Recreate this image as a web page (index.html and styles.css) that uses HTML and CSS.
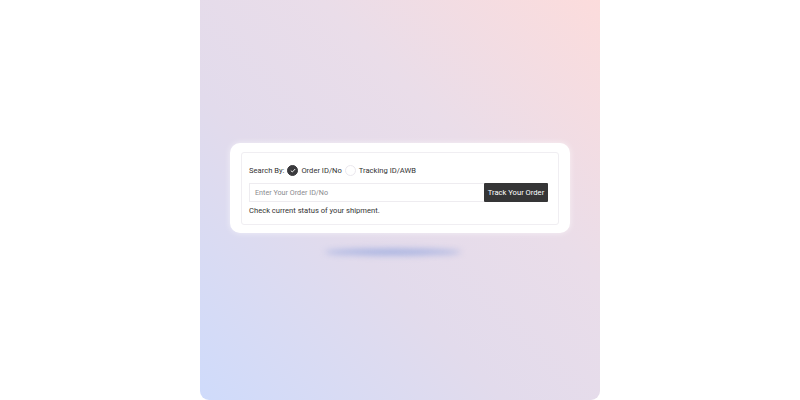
FILE: index.html
```html
<!DOCTYPE html>
<html>
<head>
<meta charset="utf-8">
<link rel="stylesheet" href="styles.css">
</head>
<body>
<div class="page">
  <div class="panel">
    <div class="card">
      <div class="inner">
        <div class="search-row">
          <span class="label">Search By:</span>
          <span class="radio checked">
            <svg width="6" height="5" viewBox="0 0 6 5"><path d="M0.8 2.6 L2.3 4 L5.2 1" fill="none" stroke="#fff" stroke-width="0.9"/></svg>
          </span>
          <span class="opt">Order ID/No</span>
          <span class="radio"></span>
          <span class="opt">Tracking ID/AWB</span>
        </div>
        <div class="input-row">
          <div class="input">Enter Your Order ID/No</div>
          <div class="btn">Track Your Order</div>
        </div>
        <div class="help">Check current status of your shipment.</div>
      </div>
    </div>
    <div class="shadow"></div>
  </div>
</div>
</body>
</html>
```
FILE: styles.css
```css
html, body { margin: 0; padding: 0; background: #fff; }
body { font-family: Roboto, "Liberation Sans", sans-serif; }
.page { width: 800px; height: 400px; display: flex; justify-content: center; }
.panel {
  width: 400px; height: 400px;
  border-radius: 0 0 9px 9px;
  background: linear-gradient(225deg, #fcdcdc 0%, #eadde9 35%, #e2dbec 62%, #cfdbfb 100%);
  display: flex; flex-direction: column; align-items: center;
  padding-top: 143px; box-sizing: border-box;
}
.card {
  width: 340px; height: 90px; box-sizing: border-box;
  background: #fff; border-radius: 10px;
  padding: 9px 11px 8px 11px;
  box-shadow: 0 0 6px rgba(255,255,255,0.6);
}
.inner {
  height: 100%; box-sizing: border-box;
  border: 1px solid #f0eef2; border-radius: 3px;
  padding: 11px 10px 0 7px;
}
.search-row { display: flex; align-items: center; font-size: 7.6px; color: #333; height: 12px; }
.label { margin-right: 3px; }
.radio {
  width: 11px; height: 11px; border-radius: 50%;
  box-sizing: border-box; border: 1px solid #ebe8ee; background: #fff;
  display: inline-flex; align-items: center; justify-content: center;
  margin-right: 3px;
}
.radio.checked { background: #3a3a3d; border-color: #3a3a3d; }
.opt { margin-right: 3px; }
.input-row { display: flex; margin-top: 7px; height: 19px; }
.input {
  flex: 1; border: 1px solid #eeecf0; border-right: none; box-sizing: border-box;
  font-size: 7.2px; color: #8a8a8e; padding-left: 5px;
  display: flex; align-items: center;
}
.btn {
  width: 64px; background: #353536; color: #fff; font-size: 7.6px;
  display: flex; align-items: center; justify-content: center; border-radius: 1px;
}
.help { font-size: 7.6px; color: #333; margin-top: 4px; }
.shadow {
  margin-top: 16px; margin-right: 14px; width: 136px; height: 6px; border-radius: 50%;
  background: rgba(140,160,220,0.75); filter: blur(3px);
}
```
